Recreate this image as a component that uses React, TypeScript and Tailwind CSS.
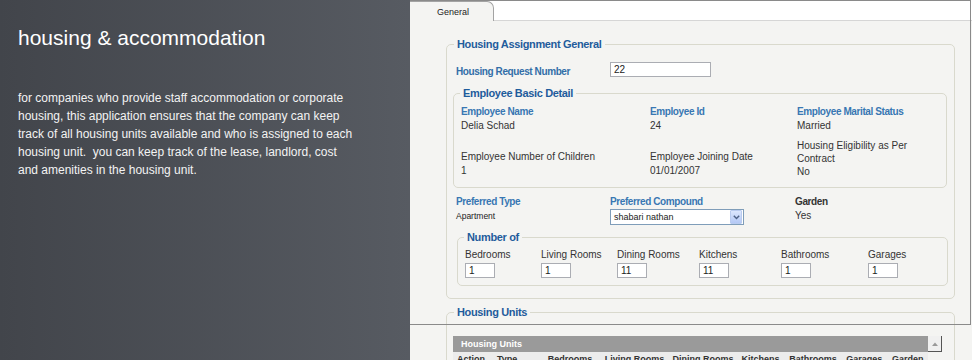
import React from "react";

const font = "font-['Liberation_Sans',Arial,sans-serif]";
const labelBase = "text-[10px] font-bold tracking-[-0.4px] leading-[14px] whitespace-nowrap";
const blueLabel = `${labelBase} text-[#3877b3]`;
const valueText = "text-[10px] leading-[14px] text-[#333] whitespace-nowrap";
const legendClass =
    "px-[3px] text-[11px] font-bold tracking-[-0.35px] leading-[14px] text-[#1f5c9c]";
const fieldsetClass = "rounded-[5px] border border-[#d9d9cd]";
const inputClass =
    "h-[15px] border border-[#abadb3] bg-white px-[3px] text-[10px] leading-[13px] text-[#222]";

const rooms = [
    { label: "Bedrooms", value: "1", w: "w-[76px]" },
    { label: "Living Rooms", value: "1", w: "w-[76px]" },
    { label: "Dining Rooms", value: "11", w: "w-[82px]" },
    { label: "Kitchens", value: "11", w: "w-[82px]" },
    { label: "Bathrooms", value: "1", w: "w-[87px]" },
    { label: "Garages", value: "1", w: "w-[60px]" },
];

const unitColumns = [
    { label: "Action", w: "w-[40px]" },
    { label: "Type", w: "w-[51px]" },
    { label: "Bedrooms", w: "w-[57px]" },
    { label: "Living Rooms", w: "w-[68px]" },
    { label: "Dining Rooms", w: "w-[69px]" },
    { label: "Kitchens", w: "w-[48px]" },
    { label: "Bathrooms", w: "w-[57px]" },
    { label: "Garages", w: "w-[46px]" },
    { label: "Garden", w: "w-[36px]" },
];

const introLines = [
    "for companies who provide staff accommodation or corporate",
    "housing, this application ensures that the company can keep",
    "track of all housing units available and who is assigned to each",
    "housing unit.\u00a0 you can keep track of the lease, landlord, cost",
    "and amenities in the housing unit.",
];

function IntroPanel() {
    return (
        <div className="w-[410px] shrink-0 bg-gradient-to-r from-[#42454b] to-[#575b62] pl-[18px] pt-[26px]">
            <h1 className="text-[21px] leading-[24px] text-white">housing &amp; accommodation</h1>
            <p className="mt-[39px] text-[12px] leading-[18px] text-[#f3f3f3]">
                {introLines.map((line) => (
                    <span key={line} className="block whitespace-nowrap">
                        {line}
                    </span>
                ))}
            </p>
        </div>
    );
}

function SelectBox() {
    return (
        <div className="flex h-[16px] w-[134px] items-center border border-[#7f9db9] bg-white">
            <span className="flex-1 pl-[3px] text-[9px] leading-[14px] text-[#222]">shabari nathan</span>
            <span className="mr-px flex h-[14px] w-[12px] items-center justify-center rounded-[1px] border border-[#b9cbef] bg-gradient-to-b from-[#dbe6fd] to-[#b4c8f5]">
                <svg width="7" height="5" viewBox="0 0 7 5">
                    <path d="M0.8 0.8 L3.5 3.6 L6.2 0.8" fill="none" stroke="#4d6185" strokeWidth="1.4" />
                </svg>
            </span>
        </div>
    );
}

function FormPanel() {
    return (
        <div className="relative flex-1 bg-[#f4f4f2]">
            {/* tab strip */}
            <div className="flex h-[21px] border-b border-[#d6d6d6] bg-white">
                <div className="mt-px flex h-[20px] w-[84px] items-center rounded-tr-[7px] border-r border-t border-[#a3a3a3] bg-[#f4f4f2] pl-[27px]">
                    <span className="text-[9px] leading-[12px] text-[#222]">General</span>
                </div>
            </div>

            <fieldset className={`${fieldsetClass} ml-[36px] mt-[16px] w-[509px] pb-[12px]`}>
                <legend className={`${legendClass} ml-[7px]`}>Housing Assignment General</legend>

                <div className="mt-[11px] flex h-[16px] items-center pl-[9px]">
                    <span className={`${labelBase} mt-[3px] w-[154px] text-[#326ea8]`}>Housing Request Number</span>
                    <div className={`${inputClass} mb-px w-[101px]`}>22</div>
                </div>

                <fieldset className={`${fieldsetClass} ml-[6px] mr-[7px] mt-[8px] pb-[9px]`}>
                    <legend className={`${legendClass} ml-[6px]`}>Employee Basic Detail</legend>
                    <div className="mt-[5px] grid grid-cols-[189px_147px_1fr] pl-[7px]">
                        <div>
                            <div className={blueLabel}>Employee Name</div>
                            <div className={valueText}>Delia Schad</div>
                        </div>
                        <div>
                            <div className={blueLabel}>Employee Id</div>
                            <div className={valueText}>24</div>
                        </div>
                        <div>
                            <div className={blueLabel}>Employee Marital Status</div>
                            <div className={valueText}>Married</div>
                        </div>
                    </div>
                    <div className="mt-[5px] grid grid-cols-[189px_147px_1fr] items-end pl-[7px]">
                        <div>
                            <div className={valueText}>Employee Number of Children</div>
                            <div className={valueText}>1</div>
                        </div>
                        <div>
                            <div className={valueText}>Employee Joining Date</div>
                            <div className={valueText}>01/01/2007</div>
                        </div>
                        <div className="pt-px text-[10px] leading-[13px] text-[#333]">
                            <div>Housing Eligibility as Per</div>
                            <div>Contract</div>
                            <div>No</div>
                        </div>
                    </div>
                </fieldset>

                <div className="mt-[7px] grid grid-cols-[154px_185px_1fr] pl-[9px]">
                    <div>
                        <div className={blueLabel}>Preferred Type</div>
                        <div className="text-[8.5px] leading-[14px] text-[#222]">Apartment</div>
                    </div>
                    <div>
                        <div className={blueLabel}>Preferred Compound</div>
                        <SelectBox />
                    </div>
                    <div>
                        <div className={`${labelBase} text-[#333]`}>Garden</div>
                        <div className={valueText}>Yes</div>
                    </div>
                </div>

                <fieldset className={`${fieldsetClass} ml-[10px] mr-[6px] mt-[5px] pb-[7px]`}>
                    <legend className={`${legendClass} ml-[6px]`}>Number of</legend>
                    <div className="mt-[4px] flex pl-[7px]">
                        {rooms.map((room) => (
                            <div key={room.label} className={room.w}>
                                <div className={valueText}>{room.label}</div>
                                <div className={`${inputClass} mt-px w-[30px]`}>{room.value}</div>
                            </div>
                        ))}
                    </div>
                </fieldset>
            </fieldset>

            <fieldset className={`${fieldsetClass} ml-[36px] mt-[6px] w-[509px] pb-[10px]`}>
                <legend className={`${legendClass} ml-[7px]`}>Housing Units</legend>
                <div className="ml-[6px] mt-[17px] flex">
                    <div className="w-[475px]">
                        <div className="flex h-[16px] items-center bg-[#9a9a9a] pl-[8px]">
                            <span className="text-[9px] font-bold leading-[12px] text-white">Housing Units</span>
                        </div>
                        <div className="flex h-[16px] items-start bg-[#ececec] pl-[4px] pt-px">
                            {unitColumns.map((col) => (
                                <span
                                    key={col.label}
                                    className={`${col.w} whitespace-nowrap text-[9px] font-bold leading-[12px] text-[#333]`}
                                >
                                    {col.label}
                                </span>
                            ))}
                        </div>
                    </div>
                    <div className="flex h-[16px] w-[14px] items-center justify-center border-b border-r border-[#555] bg-[#f0f0f0]">
                        <svg width="6" height="4" viewBox="0 0 6 4">
                            <path d="M0 4 L3 0.5 L6 4 Z" fill="#9a9a9a" />
                        </svg>
                    </div>
                </div>
            </fieldset>

            {/* frame of the screenshot window */}
            <div className="pointer-events-none absolute left-0 right-[1px] top-0 h-[325px] border-b border-r border-t border-[#8a8a8a]" />
        </div>
    );
}

export default function App() {
    return (
        <div className={`${font} flex h-[360px] w-[972px] overflow-hidden`}>
            <IntroPanel />
            <FormPanel />
        </div>
    );
}
